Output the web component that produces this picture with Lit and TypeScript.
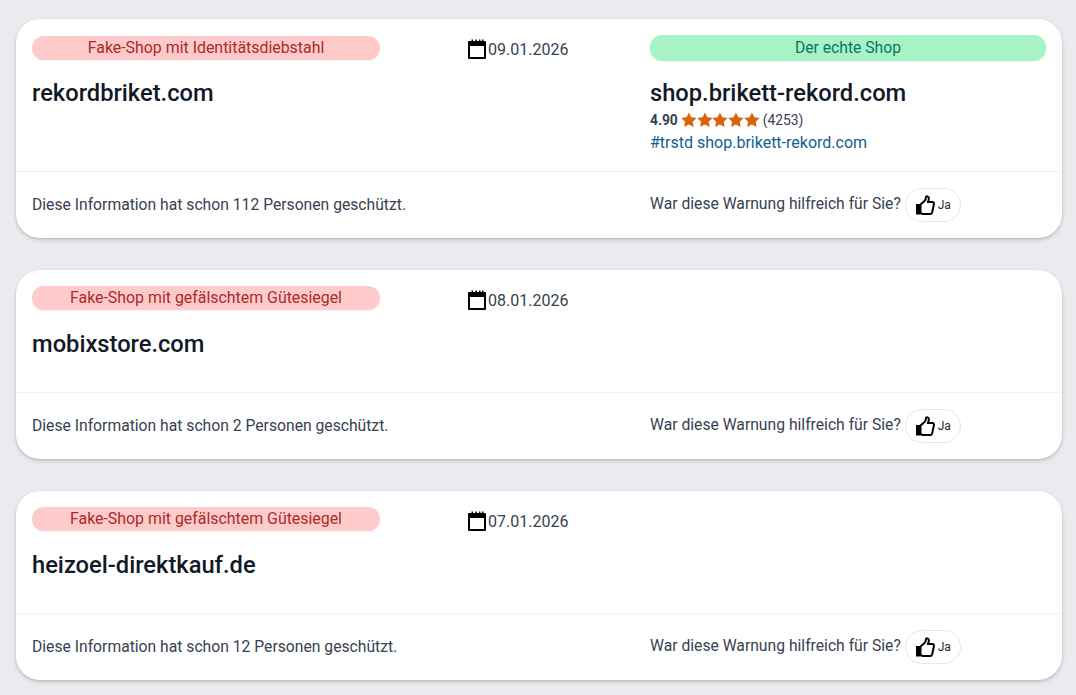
import { LitElement, html, css, svg } from "lit";
import { customElement } from "lit/decorators.js";

const star = svg`<path d="M8 .3l2.400 4.900 5.400.7-3.900 3.800.9 5.400L8 12.500l-4.800 2.600.9-5.400L.2 5.900l5.400-.7z" fill="#d9640a"/>`;

interface Item { label: string; date: string; domain: string; count: number; real?: boolean }
const items: Item[] = [
  { label: "Fake-Shop mit Identitätsdiebstahl", date: "09.01.2026", domain: "rekordbriket.com", count: 112, real: true },
  { label: "Fake-Shop mit gefälschtem Gütesiegel", date: "08.01.2026", domain: "mobixstore.com", count: 2 },
  { label: "Fake-Shop mit gefälschtem Gütesiegel", date: "07.01.2026", domain: "heizoel-direktkauf.de", count: 12 },
];

@customElement("app-root")
export class AppRoot extends LitElement {
  static styles = css`
    :host { display: block; height: 695px; overflow: hidden; background: #e9ebef; font-family: Roboto, "Liberation Sans", sans-serif; color: #374151; }
    .list { display: flex; flex-direction: column; gap: 32px; padding: 19px 14px 0 16px; }
    .card { background: #fff; border-radius: 24px; box-shadow: 0 2px 4px rgba(0,0,0,.16), 0 1px 2px rgba(0,0,0,.08); }
    .top { display: grid; grid-template-columns: 436px 182px 396px; padding: 16px 16px 0; border-bottom: 1px solid #f0f1f3; min-height: 106px; }
    .card.real .top { padding-top: 17px; padding-bottom: 16px; min-height: 0; }
    .pill { width: 348px; height: 24px; border-radius: 12px; background: #fecaca; color: #ab2b2b; font-size: 15.9px; line-height: 24px; text-align: center; box-shadow: 0 1px 2px rgba(0,0,0,.06); }
    .pill.green { width: 396px; background: #a7f3c7; color: #067a55; height: 26px; line-height: 25px; margin-top: -1px; font-size: 15.7px; }
    .date { display: flex; align-items: center; font-size: 16px; height: 26px; margin: 1px 0 0 -1px; }
    .real .date { margin-top: 0; }
    .date svg { display: block; width: 21px; height: 22px; margin-top: -1px; }
    h2 { margin: 20px 0 0; font-size: 23.7px; line-height: 28px; font-weight: 500; color: #111827; }
    .real h2 { margin-top: 19px; }
    .real .right h2 { margin-top: 18px; }
    .rating { display: flex; align-items: center; height: 20px; margin-top: 3px; font-size: 13.8px; }
    .rating b { font-weight: 700; }
    .stars { display: flex; margin: 0 3px 0 3px; }
    .stars svg { display: block; width: 15.800px; height: 16px; }
    a { display: block; font-size: 16px; line-height: 24px; margin-top: 1px; color: #0f5f8f; text-decoration: none; }
    .bottom { display: grid; grid-template-columns: 618px 396px; align-items: center; height: 66px; padding: 0 16px; font-size: 15.7px; }
    .left-note { margin-top: -2px; }
    .fb { display: flex; align-items: center; gap: 4px; }
    .fb > span:first-child { margin-top: -3px; }
    .btn { display: flex; align-items: center; justify-content: center; gap: 3px; width: 56px; height: 34px; box-sizing: border-box; border: 1px solid #e5e7eb; border-radius: 17px; font-size: 12px; color: #1f2937; background: #fff; }
    .btn svg { display: block; width: 20px; height: 22px; margin-top: -1px; }
  `;

  cal() {
    return html`<svg viewBox="0 0 21 22"><path fill="#000" d="M2 3h2.500V1.500h1.500V3h2.500V1.500H10V3h2V1.500h1.500V3h1.500V1.500h1.500V3H18a1 1 0 0 1 1 1v16a1 1 0 0 1-1 1H2a1 1 0 0 1-1-1V4a1 1 0 0 1 1-1zM3 8v11h14V8z"/></svg>`;
  }

  thumb() {
    return html`<svg viewBox="0 0 20 22"><path fill="#000" d="M1 10h4.500v10.500H1z"/><path fill="none" stroke="#000" stroke-width="2" stroke-linejoin="round" d="M5.500 10.500 9.500 7c1.200-1.200 1.500-3 1.500-4.200 0-.7 2.900-1 2.900 1.700 0 1.400-.7 2.700-1.100 3.600h4.600c1.300 0 1.800 1.200 1.500 2.200l-1.700 7.900c-.3 1.100-1 1.800-2 1.800H8c-1 0-1.700-.5-2.500-1z"/></svg>`;
  }

  renderCard(i: Item) {
    return html`<div class="card ${i.real ? "real" : ""}">
      <div class="top">
        <div>
          <div class="pill">${i.label}</div>
          <h2>${i.domain}</h2>
        </div>
        <div class="date">${this.cal()}<span>${i.date}</span></div>
        ${i.real
          ? html`<div class="right">
              <div class="pill green">Der echte Shop</div>
              <h2>shop.brikett-rekord.com</h2>
              <div class="rating"><b>4.90</b><span class="stars">${[0, 1, 2, 3, 4].map(() => html`<svg viewBox="0 0 16 16">${star}</svg>`)}</span><span>(4253)</span></div>
              <a>#trstd shop.brikett-rekord.com</a>
            </div>`
          : html`<div></div>`}
      </div>
      <div class="bottom">
        <div class="left-note">Diese Information hat schon ${i.count} Personen geschützt.</div>
        <div class="fb"><span>War diese Warnung hilfreich für Sie?</span><span class="btn">${this.thumb()}<span>Ja</span></span></div>
      </div>
    </div>`;
  }

  render() {
    return html`<div class="list">${items.map((i) => this.renderCard(i))}</div>`;
  }
}
